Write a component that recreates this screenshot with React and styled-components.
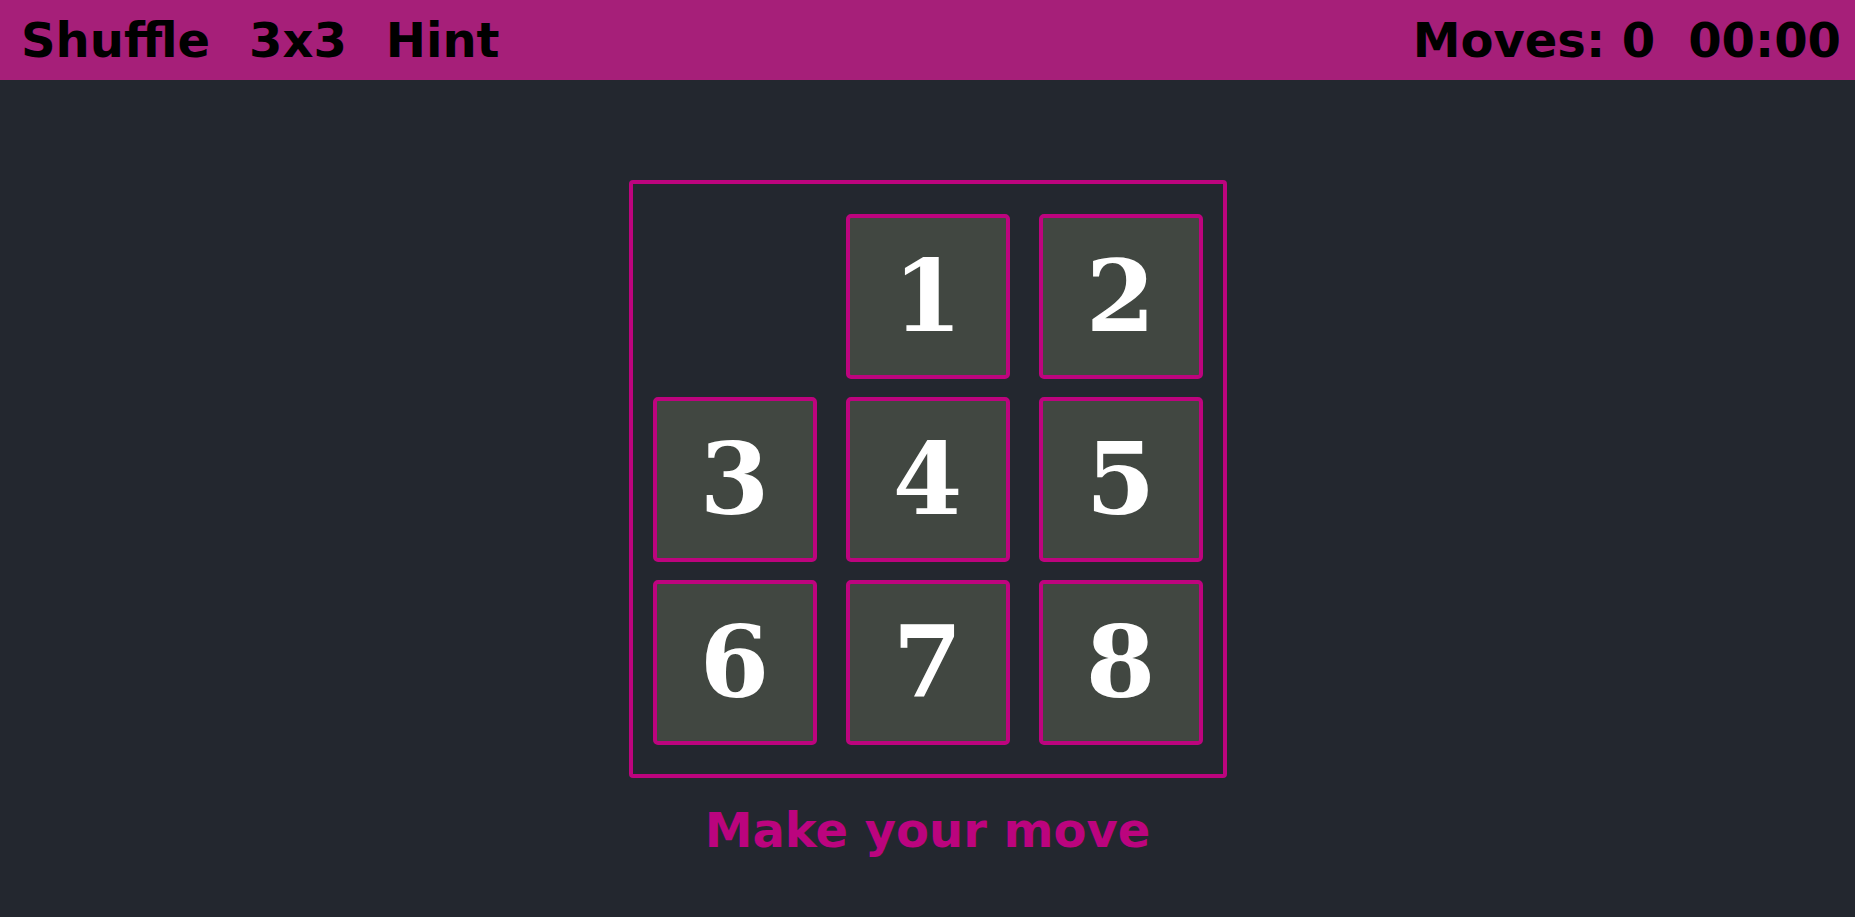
import React from "react";
import styled, { createGlobalStyle } from "styled-components";

const GlobalStyle = createGlobalStyle`
  html, body {
    margin: 0;
    padding: 0;
    background: #23272f;
    font-family: "DejaVu Sans", Verdana, sans-serif;
  }
`;

const tiles = [null, 1, 2, 3, 4, 5, 6, 7, 8];

function App() {
  return (
    <>
      <GlobalStyle />
      <Page>
        <Header>
          <Menu>
            <MenuButton>Shuffle</MenuButton>
            <MenuButton>3x3</MenuButton>
            <MenuButton>Hint</MenuButton>
          </Menu>
          <Stats>
            <span>Moves: 0</span>
            <span>00:00</span>
          </Stats>
        </Header>
        <Main>
          <Board>
            {tiles.map((n, i) =>
              n === null ? <Empty key={i} /> : <Tile key={i}>{n}</Tile>
            )}
          </Board>
          <Status>Make your move</Status>
        </Main>
      </Page>
    </>
  );
}

export default App;

const Page = styled.div`
  min-height: 917px;
  background: #23272f;
`;

const Header = styled.header`
  display: flex;
  justify-content: space-between;
  align-items: center;
  height: 80px;
  padding: 0 14px 0 21px;
  background: #a61f79;
  color: #000;
  font-size: 48px;
  font-weight: bold;
  box-sizing: border-box;
`;

const Menu = styled.nav`
  display: flex;
  gap: 39px;
`;

const MenuButton = styled.span`
  cursor: pointer;
  line-height: 1;
`;

const Stats = styled.div`
  display: flex;
  gap: 33px;
  line-height: 1;
`;

const Main = styled.main`
  display: flex;
  flex-direction: column;
  align-items: center;
  padding-top: 100px;
`;

const Board = styled.div`
  display: grid;
  grid-template-columns: repeat(3, 164px);
  grid-template-rows: repeat(3, 165px);
  column-gap: 29px;
  row-gap: 18px;
  justify-content: center;
  align-content: center;
  width: 590px;
  height: 590px;
  border: 4px solid #bd047e;
  border-radius: 4px;
`;

const Tile = styled.div`
  display: flex;
  align-items: center;
  justify-content: center;
  background: #414741;
  border: 4px solid #bd047e;
  border-radius: 5px;
  color: #fff;
  font-family: "DejaVu Serif", "Liberation Serif", serif;
  font-weight: bold;
  font-size: 100px;
  box-sizing: border-box;
`;

const Empty = styled.div``;

const Status = styled.div`
  margin-top: 24px;
  color: #bb047e;
  font-size: 48px;
  font-weight: bold;
  line-height: 1.2;
`;
